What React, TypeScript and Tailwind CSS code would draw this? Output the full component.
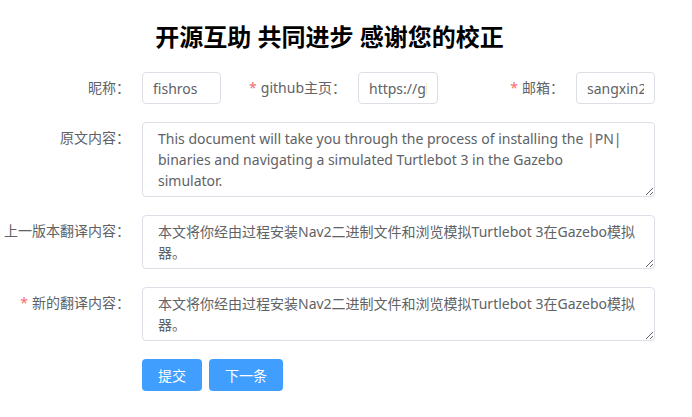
import type { ReactNode } from 'react';

const FONT = "font-['Noto_Sans','Noto_Sans_CJK_SC',sans-serif]";

function Label({ width, required, children }: { width: string; required?: boolean; children: ReactNode }) {
  return (
    <label className={`${width} shrink-0 pr-3 text-right text-[14px] leading-8 text-[#606266] whitespace-nowrap`}>
      {required && <span className="mr-1 text-[#F56C6C]">*</span>}
      {children}
    </label>
  );
}

function TextInput({ width, value }: { width: string; value: string }) {
  return (
    <input
      type="text"
      defaultValue={value}
      className={`${width} h-8 shrink-0 rounded border border-[#DCDFE6] bg-white px-[10px] text-[14px] text-[#606266] outline-none ${FONT}`}
    />
  );
}

function Area({ rows, value }: { rows: number; value: string }) {
  return (
    <textarea
      rows={rows}
      defaultValue={value}
      className={`w-[513px] resize-y rounded border border-[#DCDFE6] bg-white px-[15px] py-[5px] text-[14px] leading-[21px] text-[#606266] outline-none ${FONT}`}
    />
  );
}

const source =
  'This document will take you through the process of installing the |PN| binaries and navigating a simulated Turtlebot 3 in the Gazebo\nsimulator.';
const translated = '本文将你经由过程安装Nav2二进制文件和浏览模拟Turtlebot 3在Gazebo模拟器。';

export default function App() {
  return (
    <div className={`h-[417px] w-[692px] overflow-hidden bg-white ${FONT}`}>
      <div className="w-[659px]">
        <h2 className="pt-[19px] text-center text-[24px] font-bold leading-[36px] text-black">
          开源互助 共同进步 感谢您的校正
        </h2>

        <form className="mt-[17px] flex flex-col gap-[18px]" onSubmit={e => e.preventDefault()}>
          {/* basic info */}
          <div className="flex items-center">
            <Label width="w-[142px]">昵称：</Label>
            <TextInput width="w-[79px]" value="fishros" />
            <Label width="w-[137px]" required>github主页：</Label>
            <TextInput width="w-[80px]" value="https://github.com/fishros" />
            <Label width="w-[138px]" required>邮箱：</Label>
            <TextInput width="w-[79px]" value="sangxin2014@sina.com" />
          </div>

          <div className="flex items-start">
            <Label width="w-[142px]">原文内容：</Label>
            <Area rows={3} value={source} />
          </div>

          <div className="flex items-start">
            <Label width="w-[142px]">上一版本翻译内容：</Label>
            <Area rows={2} value={translated} />
          </div>

          <div className="flex items-start">
            <Label width="w-[142px]" required>新的翻译内容：</Label>
            <Area rows={2} value={translated} />
          </div>

          <div className="flex gap-[7px] pl-[142px]">
            <button type="submit" className="h-8 rounded bg-[#409EFF] px-4 text-[14px] text-white">
              提交
            </button>
            <button type="button" className="h-8 rounded bg-[#409EFF] px-4 text-[14px] text-white">
              下一条
            </button>
          </div>
        </form>
      </div>
    </div>
  );
}
